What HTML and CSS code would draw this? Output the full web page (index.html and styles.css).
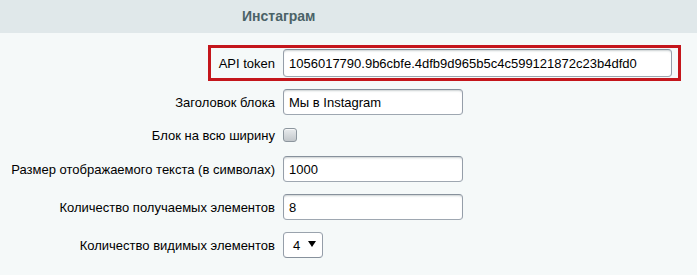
FILE: index.html
```html
<!DOCTYPE html>
<html lang="ru">
<head>
    <meta charset="UTF-8">
    <title>Инстаграм</title>
    <link rel="stylesheet" href="styles.css">
</head>
<body>
    <div class="heading">Инстаграм</div>

    <div class="form">
        <div class="highlight">
            <label class="label label-token">API token</label>
            <input class="field field-token" type="text" value="1056017790.9b6cbfe.4dfb9d965b5c4c599121872c23b4dfd0">
        </div>

        <div class="row row-first">
            <label class="label">Заголовок блока</label>
            <input class="field" type="text" value="Мы в Instagram">
        </div>

        <div class="row row-check">
            <label class="label">Блок на всю ширину</label>
            <span class="checkbox"></span>
        </div>

        <div class="row">
            <label class="label">Размер отображаемого текста (в символах)</label>
            <input class="field" type="text" value="1000">
        </div>

        <div class="row row-wide">
            <label class="label">Количество получаемых элементов</label>
            <input class="field" type="text" value="8">
        </div>

        <div class="row row-wide">
            <label class="label">Количество видимых элементов</label>
            <div class="select">
                <span class="select-value">4</span>
                <span class="select-arrow"></span>
            </div>
        </div>
    </div>
</body>
</html>
```

FILE: styles.css
```css
body {
    margin: 0;
    background: #f5f9f9;
    font-family: "Liberation Sans", Arial, sans-serif;
    font-size: 13px;
    color: #000;
}
.heading {
    height: 33px;
    line-height: 33px;
    background: #e0e8ea;
    color: #4b6267;
    font-weight: bold;
    font-size: 14px;
    padding-left: 242px;
}
.form {
    padding-top: 12px;
}
.row {
    display: flex;
    align-items: center;
    height: 26px;
    margin-top: 8px;
}
.row-first {
    margin-top: 8px;
}
.row-check {
    margin-top: 7px;
}
.row-wide {
    margin-top: 12px;
}
.label {
    width: 275px;
    text-align: right;
    margin-right: 8px;
    flex-shrink: 0;
}
.highlight {
    display: flex;
    align-items: center;
    box-sizing: border-box;
    margin-left: 208px;
    width: 473px;
    height: 36px;
    border: 3px solid #c4161c;
    padding: 0 6px 0 0;
}
.label-token {
    width: 64px;
}
.field {
    box-sizing: border-box;
    width: 180px;
    height: 26px;
    padding: 0 5px;
    border: 1px solid #959ea9;
    border-color: #87919c #959ea9 #9ea7b1 #959ea9;
    border-radius: 4px;
    background: #fff;
    box-shadow: inset 0 2px 2px -1px rgba(180, 188, 191, 0.7);
    font-family: "Liberation Sans", Arial, sans-serif;
    font-size: 13px;
    color: #000;
    outline: none;
}
.field-token {
    width: 389px;
    height: 28px;
}
.checkbox {
    display: inline-block;
    box-sizing: border-box;
    width: 14px;
    height: 14px;
    border: 1px solid #8c969e;
    border-radius: 3px;
    background: linear-gradient(#e8ebed, #c2c7cb);
    box-shadow: inset 0 1px 0 #f6f7f8;
}
.select {
    box-sizing: border-box;
    display: flex;
    align-items: center;
    width: 40px;
    height: 26px;
    padding: 0 6px 0 9px;
    border: 1px solid #959ea9;
    border-color: #9aa3ad #959ea9 #87919c #959ea9;
    border-radius: 4px;
    background: #fff;
}
.select-value {
    flex: 1;
}
.select-arrow {
    width: 0;
    height: 0;
    border-left: 4px solid transparent;
    border-right: 4px solid transparent;
    border-top: 6px solid #000;
    margin-bottom: 3px;
}
```
